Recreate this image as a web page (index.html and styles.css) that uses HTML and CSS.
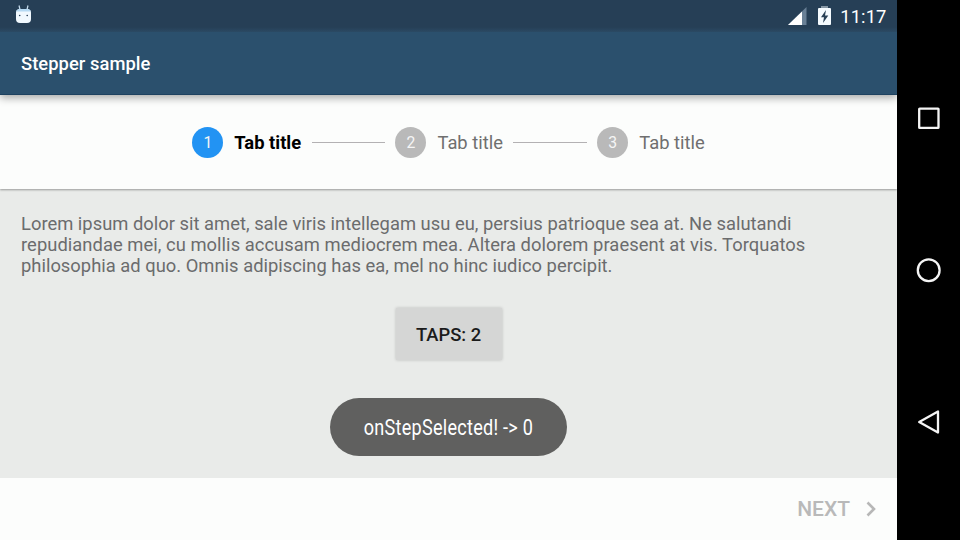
FILE: index.html
```html
<!DOCTYPE html>
<html lang="en">
<head>
<meta charset="utf-8">
<title>Stepper sample</title>
<link rel="stylesheet" href="styles.css">
</head>
<body>
<div class="device">
  <div class="app">
    <header class="header">
      <div class="status-bar">
        <svg class="debug-icon" width="17" height="20" viewBox="0 0 17 20">
          <path d="M4 .5l1 4M13 .5l-1 4" stroke="#c9dff0" stroke-width="1.2"/>
          <path d="M1 7.500Q1 4 5 4h7q4 0 4 3.500V14q0 4-4 4H5q-4 0-4-4z" fill="#f1f9ff"/>
          <path d="M1.200 6.500Q1.500 4 5 4h7q3.500 0 3.800 2.500z" fill="#b5d9f3"/>
          <circle cx="4.7" cy="10.500" r=".8" fill="#263f56"/><circle cx="12.2" cy="10.500" r=".8" fill="#263f56"/>
        </svg>
        <div class="status-icons">
          <svg width="19" height="18" viewBox="0 0 19 18">
            <path d="M0 18L18.5 0v18z" fill="#698096"/>
            <path d="M0 18L14 4.4V18z" fill="#fff"/>
          </svg>
          <svg class="battery" width="13" height="19" viewBox="0 0 13 19">
            <path d="M3 0h7v2H3z" fill="#8798a6"/>
            <path d="M1 2h11q1 0 1 1v15q0 1-1 1H1q-1 0-1-1V3q0-1 1-1z" fill="#f5fbff"/>
            <path d="M8 4L3 11.3h3L5 17l5.3-7.5H7z" fill="#263f56"/>
          </svg>
          <span class="clock">11:17</span>
        </div>
      </div>
      <h1 class="title">Stepper sample</h1>
    </header>
    <nav class="stepper">
      <div class="step active"><span class="number">1</span><span class="label">Tab title</span></div>
      <span class="line"></span>
      <div class="step"><span class="number">2</span><span class="label">Tab title</span></div>
      <span class="line"></span>
      <div class="step"><span class="number">3</span><span class="label">Tab title</span></div>
    </nav>
    <main class="content">
      <p class="copy">Lorem ipsum dolor sit amet, sale viris intellegam usu eu, persius patrioque sea at. Ne salutandi<br><span class="wide">repudiandae mei, cu mollis accusam mediocrem mea. Altera dolorem praesent at vis. Torquatos</span><br>philosophia ad quo. Omnis adipiscing has ea, mel no hinc iudico percipit.</p>
      <button class="taps">TAPS: 2</button>
      <div class="toast"><span class="toast-text">onStepSelected! -&gt; 0</span></div>
    </main>
    <footer class="footer">
      <span class="next">NEXT</span>
      <svg width="10" height="16" viewBox="0 0 10 16"><path d="M1.5 1.5L8 8l-6.500 6.500" fill="none" stroke="#b7b7b7" stroke-width="2.600"/></svg>
    </footer>
  </div>
  <aside class="nav-bar">
    <svg width="26" height="26" viewBox="0 0 26 26"><rect x="3.200" y="3.600" width="19.300" height="19.300" rx=".5"/></svg>
    <svg width="26" height="26" viewBox="0 0 26 26"><circle cx="12.700" cy="13.200" r="10.900"/></svg>
    <svg width="26" height="26" viewBox="0 0 26 26"><path d="M22 2.500v21L3.200 13z"/></svg>
  </aside>
</div>
</body>
</html>
```
FILE: styles.css
```css
* { box-sizing: border-box; }
body { margin: 0; font-family: Roboto, sans-serif; }
.device { display: flex; width: 960px; height: 540px; background: #000; overflow: hidden; }
.app { display: flex; flex-direction: column; width: 897px; background: #fcfdfc; overflow: hidden; }
.header {
  position: relative;
  z-index: 2;
  height: 95px;
  background: #2b506d;
  border-bottom: 1px solid #1e4260;
  box-shadow: 0 3px 8px rgba(0, 0, 0, .33);
  color: #fff;
}
.status-bar {
  display: flex;
  justify-content: space-between;
  height: 32px;
  padding: 5px 10.500px 0 15px;
  background: linear-gradient(#263f56 85%, #2b4a64);
}
.status-icons { display: flex; align-items: flex-start; }
.status-icons svg { margin-top: 2px; }
.status-icons .battery { margin: 1px 9px 0 11px; }
.clock { font-size: 18.370px; line-height: 23px; letter-spacing: .1px; }
.title { margin: 21px 0 0 21px; font-size: 18.370px; line-height: 22px; font-weight: 500; letter-spacing: .05px; }
.stepper {
  position: relative;
  z-index: 1;
  display: flex;
  align-items: center;
  justify-content: center;
  height: 94px;
  background: #fcfdfc;
  box-shadow: 0 1px 2px rgba(0, 0, 0, .35);
}
.step { display: flex; align-items: center; gap: 11px; color: #6f6f6f; font-size: 18.370px; }
.number {
  width: 31px;
  height: 31px;
  border-radius: 50%;
  background: #b9b9b9;
  color: #f5f5f5;
  font-size: 15.750px;
  line-height: 32px;
  text-align: center;
}
.active .number { background: #2293f3; }
.active .label { color: #000; font-weight: 700; }
.line { width: 73.300px; height: 1px; margin: 0 10.500px; background: #b3b1b3; }
.content {
  display: flex;
  flex-direction: column;
  align-items: center;
  height: 289px;
  padding-top: 24px;
  background: #e9ebe9;
}
.copy { width: 855px; height: 64px; margin: 0; color: #6b6c6d; font-size: 18.370px; line-height: 21.200px; letter-spacing: .01px; white-space: nowrap; }
.wide { letter-spacing: .045px; }
.taps {
  width: 106px;
  height: 52px;
  margin-top: 31px;
  padding: 0;
  border: 0;
  background: #d5d6d5;
  box-shadow: 0 0 3px rgba(0, 0, 0, .2);
  color: #1b1b1b;
  font: 500 18.370px Roboto, sans-serif;
}
.toast {
  display: flex;
  align-items: center;
  justify-content: center;
  width: 237px;
  height: 58px;
  margin-top: 38px;
  padding-top: 2px;
  border-radius: 29px;
  background: #60605f;
  color: #fff;
}
.toast-text { font-size: 21px; letter-spacing: .3px; white-space: nowrap; transform: scale(.86, 1.04); }
.footer {
  display: flex;
  align-items: center;
  justify-content: flex-end;
  flex: 1;
  gap: 16px;
  padding: 0 21px 0 0;
}
.next { color: #b9b9b9; font-size: 21px; font-weight: 500; }
.nav-bar { display: flex; flex-direction: column; align-items: center; justify-content: space-between; flex: 1; padding: 105px 0; }
.nav-bar svg { fill: none; stroke: #f4f4f4; stroke-width: 2.300; stroke-linejoin: round; }
```
